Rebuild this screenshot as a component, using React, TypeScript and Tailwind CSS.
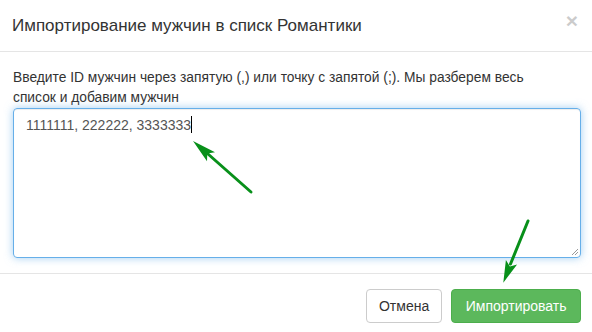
import React from 'react';

const font = { fontFamily: '"Liberation Sans", Arial, sans-serif' };

function Arrows() {
  return (
    <svg className="absolute inset-0 pointer-events-none" width="592" height="332" viewBox="0 0 592 332">
      {/* arrow pointing at the textarea value */}
      <line x1="251" y1="192" x2="208" y2="154" stroke="#08901a" strokeWidth="3" strokeLinecap="round" />
      <polygon points="193,141 215,152.3 207.3,153.5 207,161.3" fill="#08901a" />
      {/* arrow pointing at the import button */}
      <line x1="528" y1="221" x2="510.5" y2="264" stroke="#08901a" strokeWidth="3" strokeLinecap="round" />
      <polygon points="503.3,282.7 505.9,260.1 509.9,266.4 517.1,264.5" fill="#08901a" />
    </svg>
  );
}

export default function App() {
  return (
    <div className="relative w-[592px] h-[332px] overflow-hidden bg-white text-[#333]" style={font}>
      {/* Header */}
      <div className="h-[52px] flex items-center justify-between pl-[12px] pr-[14px] border-b border-[#e5e5e5]">
        <h4 className="text-[17px] leading-[20px] font-normal text-[#333]">Импортирование мужчин в списк Романтики</h4>
        <button className="text-[21px] leading-none font-bold text-black opacity-20 -mt-[10px]">×</button>
      </div>

      {/* Body */}
      <div className="pt-[16px] pb-[15px] pl-[13px] pr-[11px] border-b border-[#e5e5e5]">
        <p className="text-[13.8px] leading-[20px]">
          Введите ID мужчин через запятую (,) или точку с запятой (;). Мы разберем весь
          <br />
          список и добавим мужчин
        </p>
        <div className="relative h-[150px] rounded-[4px] border border-[#66afe9] px-[12px] py-[6px] text-[14px] leading-[20px] text-[#555] shadow-[inset_0_1px_1px_rgba(0,0,0,0.075),0_0_8px_rgba(102,175,233,0.6)]">
          <span>1111111, 222222, 3333333</span>
          <span className="inline-block w-px h-[17px] bg-black align-[-3px]" />
          <svg className="absolute right-[1px] bottom-[1px]" width="8" height="8" viewBox="0 0 8 8">
            <line x1="1" y1="7" x2="7" y2="1" stroke="#999" strokeWidth="1" />
            <line x1="4" y1="7" x2="7" y2="4" stroke="#999" strokeWidth="1" />
          </svg>
        </div>
      </div>

      {/* Footer */}
      <div className="flex justify-end gap-[9px] pt-[15px] pr-[11px]">
        <button className="h-[34px] px-[12px] rounded-[4px] border border-[#ccc] bg-white text-[14px] leading-[20px] text-[#333]">
          Отмена
        </button>
        <button className="h-[34px] px-[13.5px] rounded-[4px] border border-[#4cae4c] bg-[#5cb85c] text-[14px] leading-[20px] text-white">
          Импортировать
        </button>
      </div>

      <Arrows />
    </div>
  );
}
